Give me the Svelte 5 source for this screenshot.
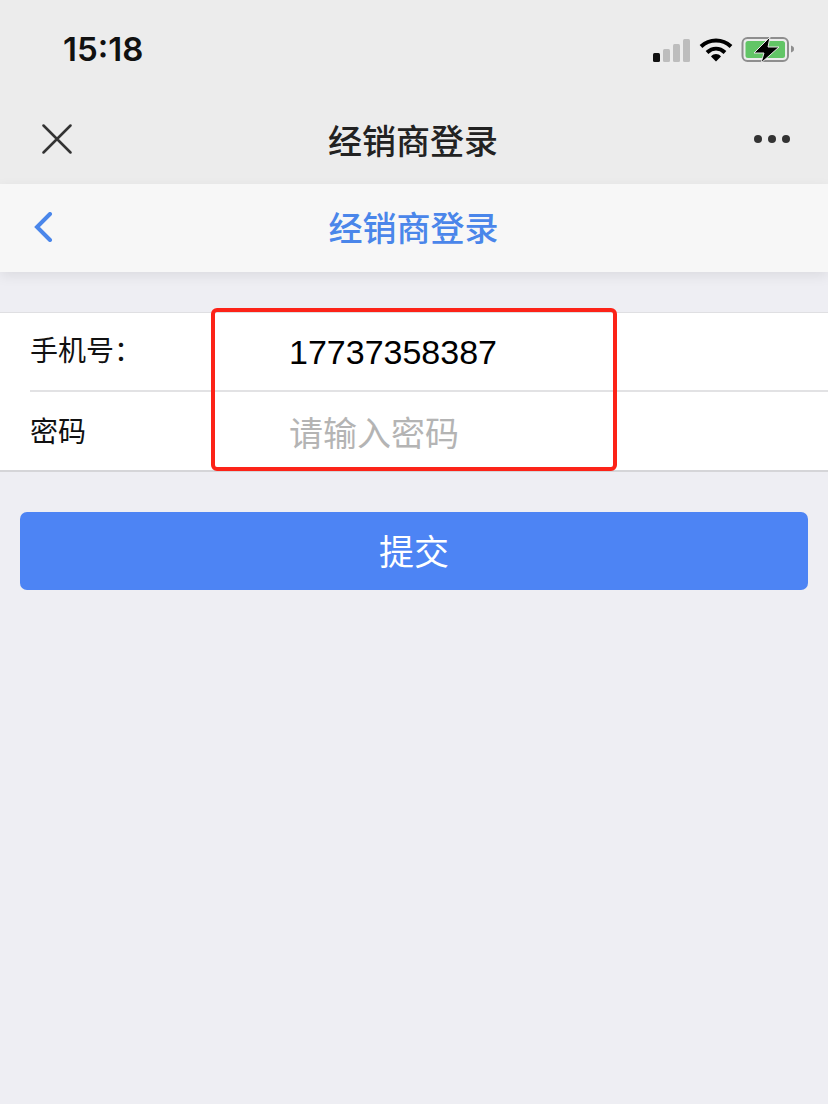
<script>
    let phone = '17737358387';
</script>

<div class="page">
    <div class="top">
        <div class="status">
            <span class="time">15:18</span>
            <div class="status-icons">
                <svg width="38" height="24" viewBox="0 0 38 24">
                    <rect x="1" y="15" width="7" height="9" rx="1.5" fill="#111" />
                    <rect x="11" y="11" width="7" height="13" rx="1.500" fill="#bdbdbd" />
                    <rect x="21" y="6" width="7" height="18" rx="1.500" fill="#bdbdbd" />
                    <rect x="31" y="1" width="7" height="23" rx="1.500" fill="#bdbdbd" />
                </svg>
                <svg class="wifi" width="34" height="24" viewBox="0 0 34 24">
                    <path d="M2 8.500C10.500 .5 23.500 .5 32 8.500" fill="none" stroke="#000" stroke-width="4" />
                    <path d="M8 14.500C13.500 9.500 20.500 9.500 26 14.500" fill="none" stroke="#000" stroke-width="4" />
                    <path d="M12 18.500C15 15.300 19 15.300 22 18.500L17 23.500Z" fill="#000" />
                </svg>
                <svg class="battery" width="56" height="30" viewBox="0 0 56 30">
                    <rect x="1.500" y="3" width="45.500" height="23" rx="5" fill="none" stroke="#8e8e8e" stroke-width="2" />
                    <rect x="4.500" y="6" width="39.500" height="17" rx="2.500" fill="#62c566" />
                    <path d="M50 10.500c2.500 .8 3 1.800 3 3.500s-.5 2.700-3 3.500z" fill="#8e8e8e" />
                    <path d="M29 2L13 18H23L20 28L38 12H27Z" fill="#000" stroke="#e6e6e6" stroke-width="1" />
                </svg>
            </div>
        </div>
        <div class="webview-bar">
            <svg width="30" height="30" viewBox="0 0 30 30">
                <path d="M1.500 1.500L28.500 28.500M28.500 1.500L1.500 28.500" stroke="#333" stroke-width="2.500" stroke-linecap="round" />
            </svg>
            <span class="webview-title">经销商登录</span>
            <div class="dots"><i></i><i></i><i></i></div>
        </div>
    </div>

    <div class="nav">
        <svg class="back" width="20" height="30" viewBox="0 0 20 30">
            <path d="M17 2L4 15L17 28" fill="none" stroke="#4a86ea" stroke-width="4" stroke-linecap="round" />
        </svg>
        <span class="nav-title">经销商登录</span>
    </div>

    <div class="form">
        <div class="row">
            <span class="label phone-label">手机号：</span>
            <span class="value">{phone}</span>
        </div>
        <div class="row last">
            <span class="label pass-label">密码</span>
            <span class="placeholder">请输入密码</span>
        </div>
        <div class="annotation"></div>
    </div>

    <div class="submit-wrap">
        <button class="submit">提交</button>
    </div>
</div>

<style>
    :global(body) { margin: 0; background: #eeeef3; }
    .page {
        width: 828px;
        height: 1104px;
        overflow: hidden;
        background: #eeeef3;
        font-family: "Liberation Sans", "Noto Sans CJK SC", sans-serif;
    }
    .top { background: #ececec; height: 184px; }
    .status { height: 100px; display: flex; justify-content: space-between; align-items: center; padding: 0 31px 0 63px; box-sizing: border-box; }
    .time { font-family: Inter, sans-serif; font-weight: 600; font-size: 33px; color: #111; margin-bottom: 2px; }
    .status-icons { display: flex; align-items: center; gap: 8px; }
    .wifi { margin-left: 1px; }
    .webview-bar { height: 84px; display: flex; align-items: center; justify-content: space-between; padding: 0 38px 6px 42px; box-sizing: border-box; position: relative; }
    .webview-title { flex: 1; text-align: center; font-size: 34px; color: #222; font-weight: 500; }
    .dots { display: flex; gap: 6px; }
    .dots i { width: 8px; height: 8px; border-radius: 50%; background: #333; }

    .nav {
        height: 88px;
        background: #f7f7f7;
        box-shadow: 0 4px 12px rgba(0, 0, 0, 0.08);
        display: flex;
        align-items: center;
        padding-left: 33px;
        position: relative;
    }
    .back { margin-bottom: 2px; }
    .nav-title { flex: 1; text-align: center; font-size: 34px; font-weight: 500; color: #4a86ea; margin-right: 53px; margin-left: -1px; padding-bottom: 3px; }

    .form {
        margin-top: 40px;
        background: #fff;
        border-top: 1px solid #dfdfe2;
        border-bottom: 2px solid #d5d5d8;
        padding-left: 30px;
        position: relative;
    }
    .row { height: 77px; display: flex; align-items: center; border-bottom: 2px solid #e2e2e4; }
    .row.last { height: 78px; border-bottom: 0; }
    .label { width: 260px; font-size: 28px; color: #111; }
    .phone-label { padding-bottom: 6px; }
    .pass-label { padding-bottom: 3px; }
    .value { font-size: 34px; color: #000; margin-left: -1px; padding-top: 2px; }
    .placeholder { font-size: 34px; color: #b4b4b4; margin-left: -1px; }
    .annotation {
        position: absolute;
        left: 211px;
        top: -5px;
        width: 406px;
        height: 163px;
        box-sizing: border-box;
        border: 4px solid #fc2318;
        border-radius: 6px;
    }

    .submit-wrap { padding: 40px 20px 0; }
    .submit {
        width: 100%;
        height: 78px;
        padding: 0 0 3px;
        border: 0;
        border-radius: 7px;
        background: #4d84f4;
        color: #fff;
        font-family: inherit;
        font-size: 35px;
    }
</style>
